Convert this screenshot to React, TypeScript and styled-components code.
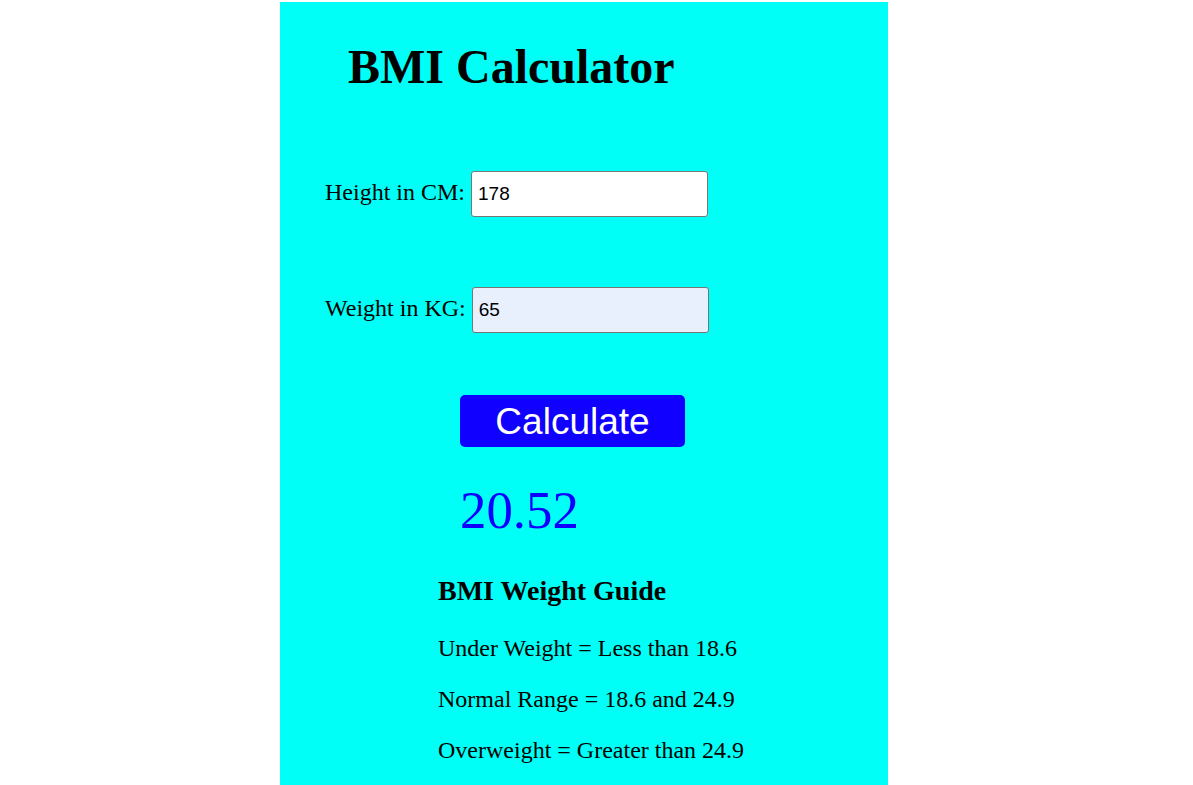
import React, { useState } from "react";
import styled, { createGlobalStyle } from "styled-components";

const GlobalStyle = createGlobalStyle`
  html, body {
    margin: 0;
    padding: 0;
    background: #ffffff;
  }
  body {
    font-family: "Liberation Serif", "Times New Roman", serif;
  }
`;

const Page = styled.div`
  padding-top: 2px;
  padding-left: 280px;
`;

const Panel = styled.main`
  width: 608px;
  min-height: calc(100vh - 2px);
  background: #00fff6;
  display: flex;
  flex-direction: column;
  align-items: flex-start;
  box-sizing: border-box;
  padding-bottom: 30px;
`;

const Title = styled.h1`
  margin: 37px 0 0 68px;
  font-size: 48px;
  font-weight: bold;
  line-height: normal;
  color: #000;
`;

const Row = styled.div<{ $top: number }>`
  display: flex;
  align-items: baseline;
  gap: 6px;
  margin: ${(p) => p.$top}px 0 0 45px;
`;

const Label = styled.label`
  font-size: 24px;
  color: #000;
`;

const Field = styled.input<{ $autofill?: boolean }>`
  box-sizing: border-box;
  width: 237px;
  height: 46px;
  padding: 0 6px;
  border: 1px solid #767676;
  border-radius: 3px;
  background: ${(p) => (p.$autofill ? "#e8f0fe" : "#ffffff")};
  font-family: "Liberation Sans", Arial, sans-serif;
  font-size: 19px;
  color: #000;
  outline: none;
`;

const CalcButton = styled.button`
  margin: 62px 0 0 180px;
  width: 225px;
  height: 52px;
  border: none;
  border-radius: 5px;
  background: #1000ff;
  color: #ffffff;
  font-family: "Liberation Sans", Arial, sans-serif;
  font-size: 37px;
  line-height: 1;
  padding: 0;
  cursor: pointer;
`;

const Result = styled.div`
  margin: 33px 0 0 180px;
  font-size: 52.8px;
  line-height: normal;
  color: #1000ff;
`;

const Guide = styled.section`
  margin: 35px 0 0 158px;
  display: flex;
  flex-direction: column;
  gap: 24px;
`;

const GuideTitle = styled.h3`
  margin: 0 0 4px 0;
  font-size: 28px;
  font-weight: bold;
  line-height: normal;
`;

const GuideLine = styled.p`
  margin: 0;
  font-size: 24px;
  line-height: normal;
`;

export default function App() {
  const [height, setHeight] = useState("178");
  const [weight, setWeight] = useState("65");
  const [bmi, setBmi] = useState("20.52");

  const calc = () => {
    const h = parseFloat(height) / 100;
    const w = parseFloat(weight);
    if (h > 0 && w > 0) setBmi((w / (h * h)).toFixed(2));
  };

  return (
    <>
      <GlobalStyle />
      <Page>
        <Panel>
          <Title>BMI Calculator</Title>
          <Row $top={77}>
            <Label htmlFor="h">Height in CM:</Label>
            <Field id="h" value={height} onChange={(e) => setHeight(e.target.value)} />
          </Row>
          <Row $top={70}>
            <Label htmlFor="w">Weight in KG:</Label>
            <Field id="w" $autofill value={weight} onChange={(e) => setWeight(e.target.value)} />
          </Row>
          <CalcButton onClick={calc}>Calculate</CalcButton>
          <Result>{bmi}</Result>
          <Guide>
            <GuideTitle>BMI Weight Guide</GuideTitle>
            <GuideLine>Under Weight = Less than 18.6</GuideLine>
            <GuideLine>Normal Range = 18.6 and 24.9</GuideLine>
            <GuideLine>Overweight = Greater than 24.9</GuideLine>
          </Guide>
        </Panel>
      </Page>
    </>
  );
}
